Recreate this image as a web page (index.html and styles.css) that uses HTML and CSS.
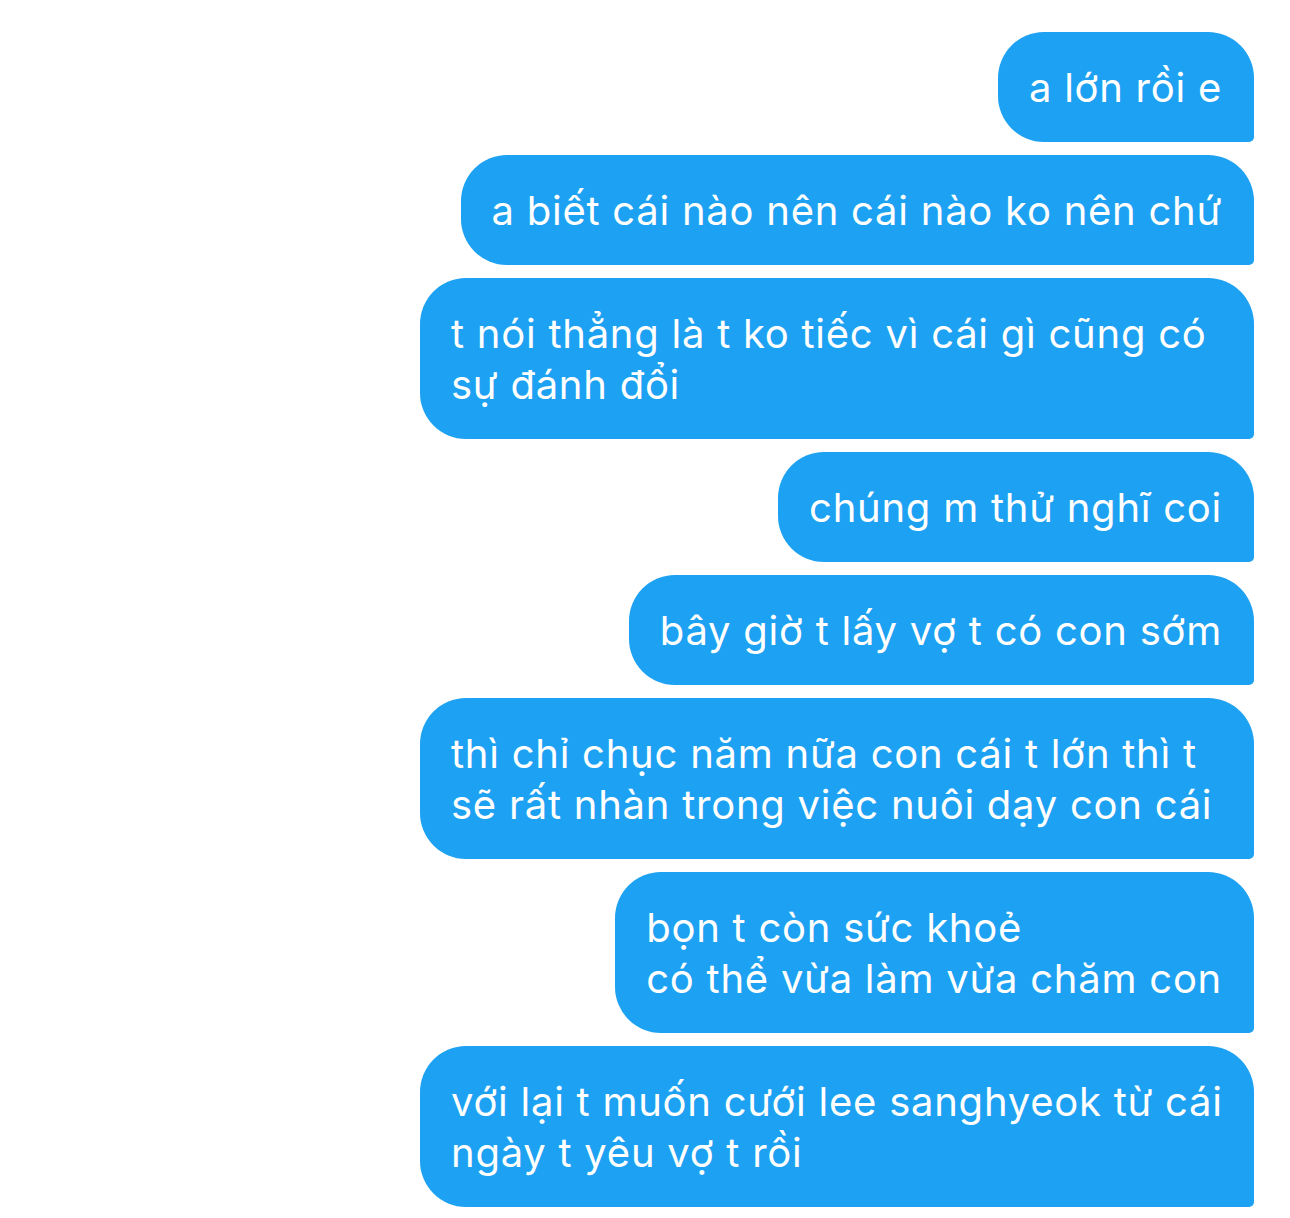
FILE: index.html
```html
<!DOCTYPE html>
<html lang="vi">
<head>
<meta charset="utf-8">
<link rel="stylesheet" href="styles.css">
</head>
<body>
<div class="chat">
  <div class="bubble">a lớn rồi e</div>
  <div class="bubble">a biết cái nào nên cái nào ko nên chứ</div>
  <div class="bubble wide">t nói thẳng là t ko tiếc vì cái gì cũng có<br>sự đánh đổi</div>
  <div class="bubble">chúng m thử nghĩ coi</div>
  <div class="bubble">bây giờ t lấy vợ t có con sớm</div>
  <div class="bubble wide">thì chỉ chục năm nữa con cái t lớn thì t<br>sẽ rất nhàn trong việc nuôi dạy con cái</div>
  <div class="bubble">bọn t còn sức khoẻ<br>có thể vừa làm vừa chăm con</div>
  <div class="bubble wide">với lại t muốn cưới lee sanghyeok từ cái<br>ngày t yêu vợ t rồi</div>
</div>
</body>
</html>
```
FILE: styles.css
```css
html, body {
  margin: 0;
  padding: 0;
  background: #ffffff;
}
.chat {
  display: flex;
  flex-direction: column;
  align-items: flex-end;
  gap: 13px;
  padding: 32px 36px 0 0;
}
.bubble {
  box-sizing: border-box;
  max-width: 834px;
  background: #1da1f2;
  color: #ffffff;
  font-family: Inter, "Noto Sans", sans-serif;
  font-size: 40px;
  letter-spacing: 0.75px;
  line-height: 51px;
  white-space: nowrap;
  padding: 29.5px 32px 29.5px 31px;
  border-radius: 46px 46px 5px 46px;
}
.bubble.wide {
  width: 834px;
}
```
